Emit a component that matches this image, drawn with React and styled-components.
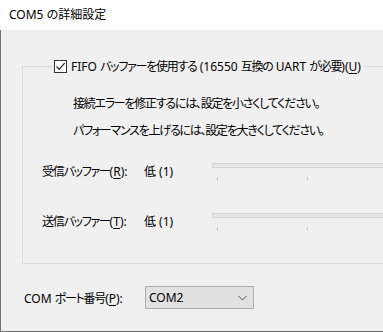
import React from "react";
import styled, { createGlobalStyle } from "styled-components";

const Global = createGlobalStyle`
  html, body { margin: 0; padding: 0; background: #f0f0f0; }
  body {
    font-family: "Noto Sans", "Noto Sans CJK JP", sans-serif;
    font-size: 12px;
    color: #000;
    font-feature-settings: "palt";
  }
`;

const Window = styled.div`
  width: 383px;
  height: 332px;
  display: flex;
  flex-direction: column;
  overflow: hidden;
`;

const TitleBar = styled.div`
  height: 30px;
  flex: none;
  background: #fff;
  padding-left: 9px;
  line-height: 29px;
  font-size: 12px;
`;

const Body = styled.div`
  flex: 1;
  background: #f0f0f0;
  border-left: 1px solid #707070;
  border-bottom: 1px solid #707070;
  padding: 36px 0 0 21px;
  display: flex;
  flex-direction: column;
  overflow: hidden;
`;

const Group = styled.div`
  position: relative;
  width: calc(100% + 20px);
  border: 1px solid #dcdcdc;
  box-sizing: border-box;
  height: 198px;
`;

const Legend = styled.label`
  position: absolute;
  top: -8px;
  left: 30px;
  height: 15px;
  padding: 0 2px 0 1px;
  background: #f0f0f0;
  display: flex;
  align-items: center;
  gap: 4px;
  white-space: nowrap;
  line-height: 15px;
`;

const CheckBox = styled.span`
  width: 13px;
  height: 13px;
  box-sizing: border-box;
  border: 1px solid #333;
  background: #fff;
  display: flex;
  align-items: center;
  justify-content: center;
`;

const Ja = styled.span`
  letter-spacing: -1.25px;
`;

const Inner = styled.div`
  display: flex;
  flex-direction: column;
  padding: 28px 0 0 19px;
`;

const Hint = styled.div`
  margin-left: 31px;
  height: 27px;
  line-height: 17px;
  white-space: nowrap;
`;

const SliderRow = styled.div`
  display: grid;
  grid-template-columns: 102px 68px 1fr;
  align-items: start;
  height: 50px;
  margin-top: ${(p) => p.$mt || 0}px;
`;

const Label = styled.span`
  line-height: 16px;
  padding-top: 9px;
  white-space: nowrap;
`;

const Track = styled.div`
  display: flex;
  flex-direction: column;
  padding-top: 8px;
`;

const Rail = styled.div`
  height: 5px;
  box-sizing: border-box;
  border: 1px solid #d6d6d6;
  background: #e7e7e7;
  margin-right: -20px;
`;

const Ticks = styled.div`
  display: flex;
  gap: 89px;
  padding-left: 5px;
  margin-top: 9px;
`;

const Tick = styled.span`
  width: 1px;
  height: ${(p) => p.$h}px;
  background: #c4c4c4;
`;

const U = styled.span`
  text-decoration: underline;
  text-underline-offset: 2px;
`;

const PortRow = styled.div`
  display: flex;
  align-items: center;
  margin-top: 22px;
  margin-left: 2px;
`;

const PortLabel = styled.span`
  width: 121px;
  white-space: nowrap;
`;

const Select = styled.div`
  width: 109px;
  height: 23px;
  box-sizing: border-box;
  border: 1px solid #adadad;
  background: #e1e1e1;
  display: flex;
  align-items: center;
  justify-content: space-between;
  padding: 0 6px 0 3px;
`;

function Slider() {
  return (
    <Track>
      <Rail />
      <Ticks>
        <Tick $h={4} />
        <Tick $h={3} />
      </Ticks>
    </Track>
  );
}

export default function App() {
  return (
    <Window>
      <Global />
      <TitleBar>COM5 の詳細設定</TitleBar>
      <Body>
        <Group>
          <Legend>
            <CheckBox>
              <svg width="11" height="11" viewBox="0 0 11 11">
                <path d="M1.5 5.5 L4.2 8.3 L9.6 2.2" fill="none" stroke="#222" strokeWidth="1.2" />
              </svg>
            </CheckBox>
            <span>
              FIFO <Ja>バッファーを使用する</Ja> (16550 <Ja>互換の</Ja> UART <Ja>が必要</Ja>)(<U>U</U>)
            </span>
          </Legend>
          <Inner>
            <Hint><Ja>接続エラーを修正するには、設定を小さくしてください。</Ja></Hint>
            <Hint><Ja>パフォーマンスを上げるには、設定を大きくしてください。</Ja></Hint>
            <SliderRow $mt={6}>
              <Label>
                <Ja>受信バッファー</Ja>(<U>R</U>):
              </Label>
              <Label>低 (1)</Label>
              <Slider />
            </SliderRow>
            <SliderRow>
              <Label>
                <Ja>送信バッファー</Ja>(<U>T</U>):
              </Label>
              <Label>低 (1)</Label>
              <Slider />
            </SliderRow>
          </Inner>
        </Group>
        <PortRow>
          <PortLabel>
            COM <Ja>ポート番号</Ja>(<U>P</U>):
          </PortLabel>
          <Select>
            <span>COM2</span>
            <svg width="9" height="6" viewBox="0 0 9 6">
              <path d="M0.5 1 L4.5 5 L8.5 1" fill="none" stroke="#555" strokeWidth="1" />
            </svg>
          </Select>
        </PortRow>
      </Body>
    </Window>
  );
}
